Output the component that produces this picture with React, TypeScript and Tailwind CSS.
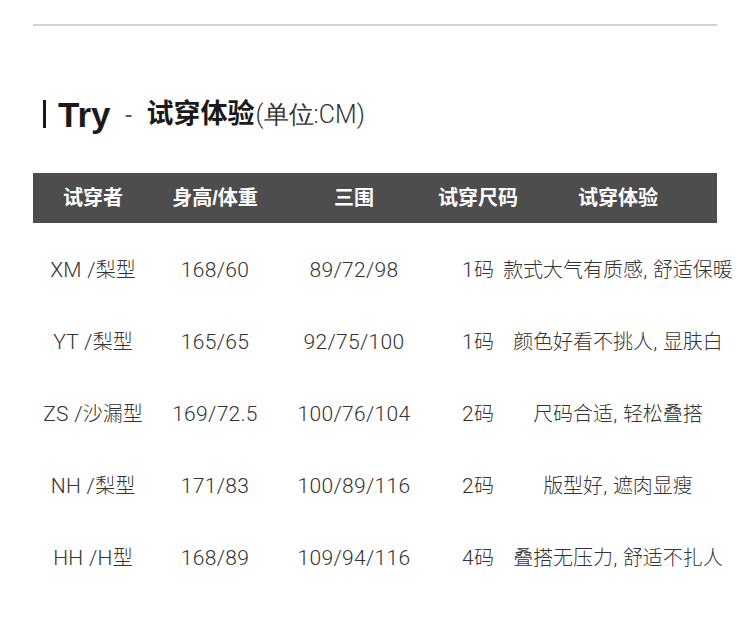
import React from "react";

type Row = {
  name: string;
  hw: string;
  size3: string;
  code: string;
  note: string;
};

const rows: Row[] = [
  { name: "XM /梨型", hw: "168/60", size3: "89/72/98", code: "1码", note: "款式大气有质感, 舒适保暖" },
  { name: "YT /梨型", hw: "165/65", size3: "92/75/100", code: "1码", note: "颜色好看不挑人, 显肤白" },
  { name: "ZS /沙漏型", hw: "169/72.5", size3: "100/76/104", code: "2码", note: "尺码合适, 轻松叠搭" },
  { name: "NH /梨型", hw: "171/83", size3: "100/89/116", code: "2码", note: "版型好, 遮肉显瘦" },
  { name: "HH /H型", hw: "168/89", size3: "109/94/116", code: "4码", note: "叠搭无压力, 舒适不扎人" },
];

const heads = ["试穿者", "身高/体重", "三围", "试穿尺码", "试穿体验"];

const cols = "grid grid-cols-[120px_124px_154px_94px_186px]";

// latin runs a touch larger and lighter than the chinese ones, like the picture
function Cell({ text }: { text: string }) {
  const parts = text.match(/[\x20-\x7e]+|[^\x20-\x7e]+/g) || [];
  return (
    <div className="flex items-baseline justify-center whitespace-pre">
      {parts.map((p, i) =>
        /^[\x20-\x7e]+$/.test(p) ? (
          <span key={i} className="font-['Roboto'] text-[21px] font-light tracking-[0.3px]">
            {p}
          </span>
        ) : (
          <span key={i} className="text-[20px] font-light">
            {p}
          </span>
        )
      )}
    </div>
  );
}

export default function App() {
  return (
    <div
      className="h-[620px] w-[750px] overflow-hidden bg-white px-[33px] pt-[24px]"
      style={{ fontFamily: '"Liberation Sans", "Noto Sans CJK SC", sans-serif' }}
    >
      <div className="h-[2px] bg-[#d2d2d2]" />

      <div className="mt-[68px] flex h-[40px] items-center text-[#1a1a1a]">
        <span className="ml-[10px] h-[28px] w-[3px] bg-[#1a1a1a]" />
        <span className="ml-[12px] text-[35px] font-bold leading-none">Try</span>
        <span className="ml-[14px] mr-[14px] text-[24px] leading-none text-[#555]">-</span>
        <span className="text-[27px] font-bold leading-none">试穿体验</span>
        <span className="ml-[1px] font-['Roboto'] text-[25px] font-light leading-none text-[#333]">(单位:CM)</span>
      </div>

      <div className={`${cols} mt-[39px] h-[50px] items-center bg-[#4d4d4d] text-[20px] font-bold text-white`}>
        {heads.map((h) => (
          <div key={h} className="flex justify-center whitespace-nowrap">
            {h}
          </div>
        ))}
      </div>

      <div className="mt-[12px]">
        {rows.map((r) => (
          <div key={r.name} className={`${cols} h-[72px] items-center text-[#333]`}>
            <Cell text={r.name} />
            <Cell text={r.hw} />
            <Cell text={r.size3} />
            <Cell text={r.code} />
            <Cell text={r.note} />
          </div>
        ))}
      </div>
    </div>
  );
}
